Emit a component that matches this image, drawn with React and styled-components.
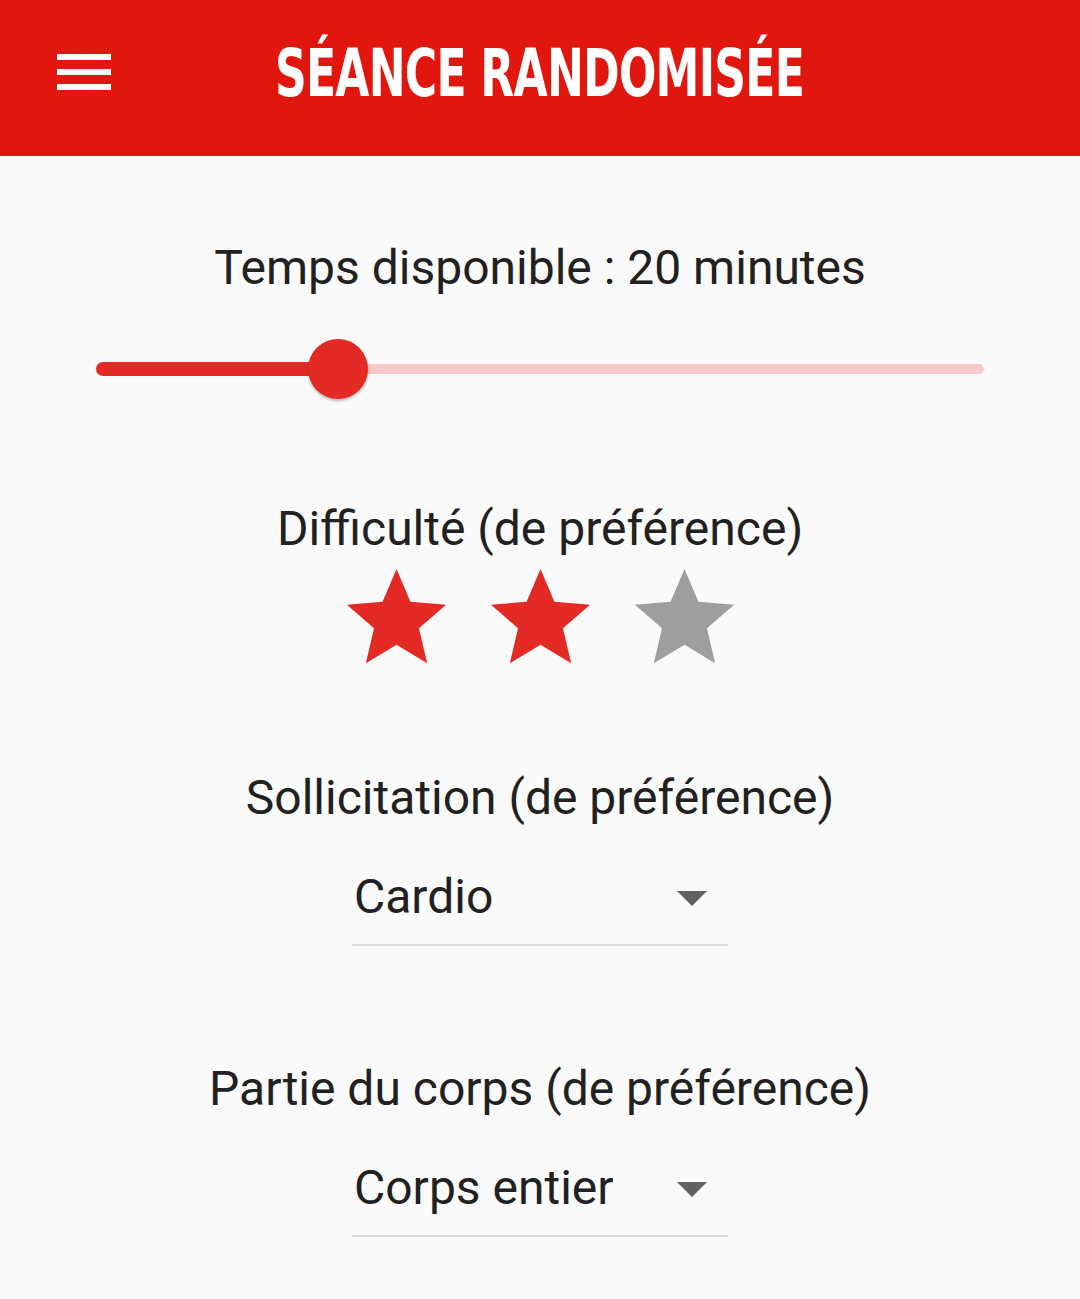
import React from "react";
import styled, { createGlobalStyle } from "styled-components";

const GlobalStyle = createGlobalStyle`
  html, body {
    margin: 0;
    padding: 0;
    background: #fafafa;
  }
  body {
    font-family: Roboto, "Liberation Sans", sans-serif;
    color: #212121;
  }
`;

const Page = styled.div`
  width: 1080px;
  min-height: 1299px;
  background: #fafafa;
`;

const Header = styled.header`
  height: 156px;
  background: #e1170f;
  display: grid;
  grid-template-columns: 1fr auto 1fr;
  align-items: center;
`;

const MenuButton = styled.div`
  padding-left: 57px;
  margin-top: -12px;
  display: flex;
  flex-direction: column;
  gap: 9px;
  width: 54px;
`;

const MenuBar = styled.span`
  display: block;
  height: 6px;
  background: #fff;
`;

const Title = styled.h1`
  margin: 0;
  color: #fff;
  font-family: "DejaVu Sans Condensed", "DejaVu Sans", sans-serif;
  font-weight: bold;
  font-size: 66px;
  letter-spacing: -1px;
  transform: scaleX(0.742);
  white-space: nowrap;
  margin-top: -10px;
`;

const Content = styled.main`
  display: flex;
  flex-direction: column;
  align-items: center;
`;

const Label = styled.div`
  font-size: 48px;
  line-height: 56px;
  text-align: center;
  margin-top: ${(p) => p.$top}px;
`;

const SliderWrap = styled.div`
  position: relative;
  width: 888px;
  height: 60px;
  margin-top: 43px;
  display: flex;
  align-items: center;
`;

const Track = styled.div`
  width: 100%;
  height: 10px;
  border-radius: 5px;
  background: #f7c9c8;
`;

const ActiveTrack = styled.div`
  position: absolute;
  left: 0;
  top: 23px;
  height: 14px;
  border-radius: 7px;
  background: #e42a24;
`;

const Thumb = styled.div`
  position: absolute;
  top: 0;
  width: 60px;
  height: 60px;
  margin-left: -30px;
  border-radius: 50%;
  background: #e42a24;
  box-shadow: 0 2px 3px rgba(0, 0, 0, 0.25);
`;

const Stars = styled.div`
  display: flex;
  gap: 25px;
  margin-top: 2px;
`;

const StarIcon = styled.svg`
  width: 119px;
  height: 119px;
  display: block;
  fill: ${(p) => (p.$on ? "#e42a24" : "#9e9e9e")};
`;

const Select = styled.div`
  width: 376px;
  margin-top: ${(p) => p.$top}px;
  border-bottom: 2px solid #dcdcdc;
  display: flex;
  align-items: center;
  justify-content: space-between;
  height: 90px;
  box-sizing: border-box;
  padding-bottom: 8px;
`;

const SelectText = styled.span`
  font-size: 48px;
  padding-left: 2px;
`;

const Caret = styled.svg`
  width: 72px;
  height: 72px;
  fill: #616161;
  margin-top: 2px;
`;

const Star = ({ on }) => (
  <StarIcon $on={on} viewBox="0 0 24 24">
    <path d="M12 17.27L18.18 21l-1.64-7.03L22 9.24l-7.19-.61L12 2 9.19 8.63 2 9.24l5.46 4.73L5.82 21z" />
  </StarIcon>
);

const Dropdown = ({ value, top }) => (
  <Select $top={top}>
    <SelectText>{value}</SelectText>
    <Caret viewBox="0 0 24 24">
      <path d="M7 10l5 5 5-5z" />
    </Caret>
  </Select>
);

const App = () => {
  const min = 5;
  const max = 60;
  const value = 20;
  const pct = ((value - min) / (max - min)) * 100;

  return (
    <Page>
      <GlobalStyle />
      <Header>
        <MenuButton>
          <MenuBar />
          <MenuBar />
          <MenuBar />
        </MenuButton>
        <Title>SÉANCE RANDOMISÉE</Title>
        <div />
      </Header>
      <Content>
        <Label $top={84}>Temps disponible : {value} minutes</Label>
        <SliderWrap>
          <Track />
          <ActiveTrack style={{ width: `${pct}%` }} />
          <Thumb style={{ left: `${pct}%` }} />
        </SliderWrap>
        <Label $top={102}>Difficulté (de préférence)</Label>
        <Stars>
          <Star on />
          <Star on />
          <Star />
        </Stars>
        <Label $top={92}>Sollicitation (de préférence)</Label>
        <Dropdown value="Cardio" top={30} />
        <Label $top={115}>Partie du corps (de préférence)</Label>
        <Dropdown value="Corps entier" top={30} />
      </Content>
    </Page>
  );
};

export default App;
